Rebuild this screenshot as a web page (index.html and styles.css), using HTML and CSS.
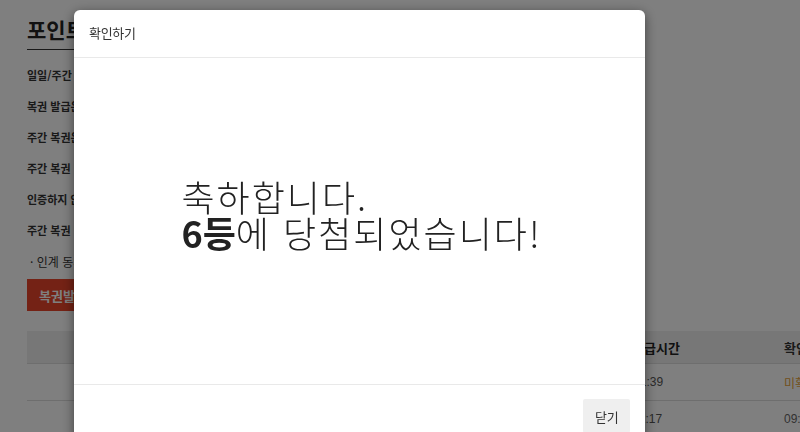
FILE: index.html
```html
<!DOCTYPE html>
<html lang="ko">
<head>
<meta charset="utf-8">
<title>포인트복권</title>
<link rel="stylesheet" href="styles.css">
</head>
<body>
<div class="page">
  <h1 class="page-title">포인트복권</h1>
  <ul class="notes">
    <li>일일/주간 포인트복권은 매일 발급됩니다.</li>
    <li>복권 발급은 1일 1회만 가능합니다.</li>
    <li>주간 복권은 매주 월요일에 추첨합니다.</li>
    <li>주간 복권 당첨 결과는 화요일에 확인 가능합니다.</li>
    <li>인증하지 않은 회원은 참여할 수 없습니다.</li>
    <li>주간 복권 당첨금은 포인트로 지급됩니다.</li>
    <li class="sub">· 인계 동의 후 지급됩니다.</li>
  </ul>
  <button class="issue-btn" type="button">복권발급</button>
  <div class="table">
    <div class="row head">
      <div class="c1">번호</div>
      <div class="c2 h2">발급시간</div>
      <div class="c3">확인여부</div>
    </div>
    <div class="row">
      <div class="c1">2</div>
      <div class="c2">2021.05.12 09:41:39</div>
      <div class="c3 orange">미확인</div>
    </div>
    <div class="row">
      <div class="c1">1</div>
      <div class="c2">2021.05.11 09:12:17</div>
      <div class="c3 grey">09:12:20</div>
    </div>
  </div>
</div>

<div class="overlay">
  <div class="modal">
    <div class="modal-header">
      <h4 class="modal-title">확인하기</h4>
    </div>
    <div class="modal-body">
      <p class="result">축하합니다.<br><b>6등</b>에 당첨되었습니다!</p>
    </div>
    <div class="modal-footer">
      <button class="close-btn" type="button">닫기</button>
    </div>
  </div>
</div>
</body>
</html>
```
FILE: styles.css
```css
html, body {
  margin: 0;
  padding: 0;
  overflow: hidden;
  background: #fff;
}
body {
  font-family: "Noto Sans CJK KR", "Noto Sans", sans-serif;
  color: #333;
  width: 800px;
  height: 432px;
}
.page {
  padding: 14px 0 0 27px;
  width: 1000px;
}
.page-title {
  display: inline-block;
  margin: 0;
  font-size: 21px;
  line-height: 30px;
  font-weight: 700;
  color: #222;
  border-bottom: 1px solid #333;
  padding-bottom: 5px;
  width: 120px;
  white-space: nowrap;
}
.notes {
  list-style: none;
  margin: 10px 0 0;
  padding: 0;
}
.notes li {
  font-size: 11px;
  font-weight: 700;
  line-height: 31px;
  color: #333;
  white-space: nowrap;
}
.notes li.sub {
  padding-left: 3px;
  font-weight: 400;
  font-size: 12px;
}
.issue-btn {
  display: block;
  margin-top: 2px;
  width: 90px;
  height: 32px;
  border: 0;
  background: #e8452a;
  color: #fff;
  font-family: inherit;
  font-size: 13px;
  font-weight: 700;
  padding: 0 0 0 12px;
  text-align: left;
}
.table {
  margin-top: 20px;
  width: 900px;
  font-size: 12px;
}
.row {
  display: grid;
  grid-template-columns: 526px 230px 1fr;
  height: 36px;
  align-items: center;
  border-bottom: 1px solid #ddd;
}
.row.head {
  height: 32px;
  background: #eee;
  font-weight: 700;
  font-size: 13px;
}
.row > div {
  white-space: nowrap;
}
.c1 { padding-left: 120px; }
.c2 { font-family: "Liberation Sans", Arial, sans-serif; color: #555; }
.c2.h2 { font-family: "Noto Sans CJK KR", sans-serif; color: #222; padding-left: 79px; }
.c3 { padding-left: 1px; }
.orange { color: #e6a23a; }
.grey { color: #666; font-family: "Liberation Sans", Arial, sans-serif; }

.overlay {
  position: fixed;
  inset: 0;
  background: rgba(0, 0, 0, 0.5);
  padding: 10px 0 0 74px;
}
.modal {
  width: 571px;
  background: #fff;
  border-radius: 6px;
  box-shadow: 0 3px 12px rgba(0, 0, 0, 0.5);
  overflow: hidden;
}
.modal-header {
  padding: 15px 15px 16px;
  border-bottom: 1px solid #e9e9e9;
}
.modal-title {
  margin: 0;
  font-size: 13px;
  letter-spacing: -0.3px;
  line-height: 16px;
  font-weight: 400;
  color: #333;
}
.modal-body {
  height: 326px;
  display: flex;
  align-items: center;
  justify-content: center;
  box-sizing: border-box;
  padding-bottom: 14px;
}
.result {
  margin: 0 0 0 4px;
  font-size: 36px;
  line-height: 36px;
  letter-spacing: 2px;
  font-weight: 300;
  color: #222;
  text-align: left;
}
.result b {
  font-weight: 700;
  letter-spacing: 0;
}
.modal-footer {
  border-top: 1px solid #e9e9e9;
  padding: 14px 15px 15px;
  display: flex;
  justify-content: flex-end;
}
.close-btn {
  height: 34px;
  border: 0;
  border-radius: 2px;
  background: #efefef;
  color: #333;
  font-family: inherit;
  font-size: 13px;
  letter-spacing: -0.2px;
  padding: 0 11.5px;
}
```
